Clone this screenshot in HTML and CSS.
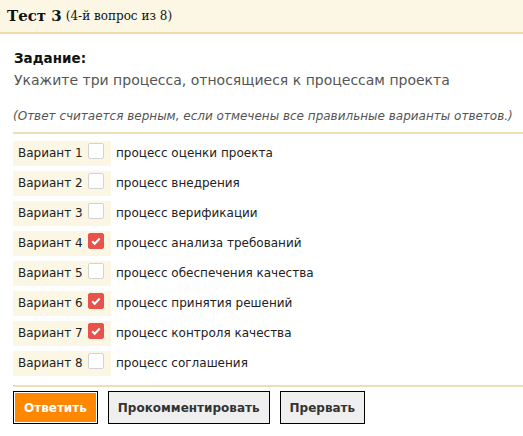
FILE: index.html
```html
<!DOCTYPE html>
<html lang="ru">
<head>
    <meta charset="UTF-8">
    <title>Тест 3</title>
    <link rel="stylesheet" href="styles.css">
</head>
<body>
    <header class="test-header">
        <span class="test-title">Тест 3</span>
        <span class="test-progress">(4-й вопрос из 8)</span>
    </header>

    <div class="content">
        <div class="task-label">Задание:</div>
        <div class="task-text">Укажите три процесса, относящиеся к процессам проекта</div>
        <div class="task-note">(Ответ считается верным, если отмечены все правильные варианты ответов.)</div>

        <div class="options">
            <label class="option">
                <span class="option-key">Вариант 1 <span class="box"></span></span>
                <span class="option-text">процесс оценки проекта</span>
            </label>
            <label class="option">
                <span class="option-key">Вариант 2 <span class="box"></span></span>
                <span class="option-text">процесс внедрения</span>
            </label>
            <label class="option">
                <span class="option-key">Вариант 3 <span class="box"></span></span>
                <span class="option-text">процесс верификации</span>
            </label>
            <label class="option">
                <span class="option-key">Вариант 4 <span class="box checked"></span></span>
                <span class="option-text">процесс анализа требований</span>
            </label>
            <label class="option">
                <span class="option-key">Вариант 5 <span class="box"></span></span>
                <span class="option-text">процесс обеспечения качества</span>
            </label>
            <label class="option">
                <span class="option-key">Вариант 6 <span class="box checked"></span></span>
                <span class="option-text">процесс принятия решений</span>
            </label>
            <label class="option">
                <span class="option-key">Вариант 7 <span class="box checked"></span></span>
                <span class="option-text">процесс контроля качества</span>
            </label>
            <label class="option">
                <span class="option-key">Вариант 8 <span class="box"></span></span>
                <span class="option-text">процесс соглашения</span>
            </label>
        </div>

        <div class="actions">
            <button class="btn btn-primary">Ответить</button>
            <button class="btn">Прокомментировать</button>
            <button class="btn">Прервать</button>
        </div>
    </div>
</body>
</html>
```

FILE: styles.css
```css
body {
    margin: 0;
    font-family: "DejaVu Sans", sans-serif;
    background-color: #ffffff;
    color: #222;
}

.test-header {
    background-color: #fcf7e5;
    border-bottom: 2px solid #ecdcaa;
    height: 32px;
    padding: 0 7px;
    display: flex;
    align-items: center;
    gap: 4px;
    font-family: "DejaVu Serif", serif;
    color: #111;
}

.test-title {
    font-size: 15px;
    font-weight: bold;
}

.test-progress {
    font-size: 12px;
}

.content {
    padding: 0 0 0 13px;
}

.task-label {
    margin-top: 16px;
    padding-left: 1px;
    font-size: 13.5px;
    font-weight: bold;
    color: #111;
    line-height: 16px;
}

.task-text {
    margin-top: 5px;
    padding-left: 1px;
    font-size: 14px;
    color: #555;
    line-height: 18px;
}

.task-note {
    margin-top: 20px;
    font-size: 12px;
    font-style: italic;
    color: #555;
    line-height: 15px;
    padding-bottom: 8px;
    border-bottom: 2px solid #ecdfb8;
}

.options {
    padding-top: 4px;
    padding-bottom: 7px;
    border-bottom: 2px solid #ecdfb8;
}

.option {
    display: flex;
    align-items: center;
    height: 30px;
    font-size: 12px;
    color: #222;
}

.option-key {
    display: flex;
    align-items: flex-start;
    gap: 5px;
    background-color: #fcf7e5;
    width: 93px;
    height: 25px;
    padding-left: 5px;
    line-height: 25px;
}

.box {
    width: 14px;
    height: 14px;
    margin-top: 2px;
    border: 1px solid #d3d3d3;
    border-radius: 2px;
    background-color: #fff;
}

.box.checked {
    border-color: #e9524a;
    background-color: #e9524a;
    background-image: url("data:image/svg+xml,%3Csvg xmlns='http://www.w3.org/2000/svg' viewBox='0 0 14 14'%3E%3Cpath d='M3.2 7.2l2.5 2.5 5-5.2' fill='none' stroke='%23fff' stroke-width='2'/%3E%3C/svg%3E");
}

.option-text {
    margin-left: 5px;
    line-height: 25px;
    height: 25px;
}

.actions {
    display: flex;
    gap: 10px;
    padding-top: 4px;
}

.btn {
    font-family: "DejaVu Sans", sans-serif;
    font-size: 12px;
    font-weight: bold;
    height: 33px;
    padding: 0 9px;
    border: 1px solid #000;
    background-color: #efefef;
    color: #333;
    cursor: pointer;
}

.btn-primary {
    background-color: #ff8800;
    color: #fff;
    box-shadow: inset 0 0 0 1px #fff;
    padding: 0 10px;
}
```
